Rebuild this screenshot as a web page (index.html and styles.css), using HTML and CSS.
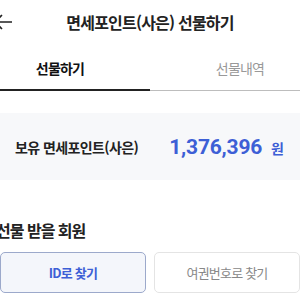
FILE: index.html
```html
<!DOCTYPE html>
<html lang="ko">
<head>
<meta charset="utf-8">
<link rel="stylesheet" href="styles.css">
</head>
<body>
<div class="page">
  <header class="header">
    <span class="back">
      <svg width="26" height="20" viewBox="0 0 26 20"><path d="M20 10H3M10 3L3 10L10 17" fill="none" stroke="#222" stroke-width="1.6"/></svg>
    </span>
    <h1 class="title">면세포인트(사은) 선물하기</h1>
  </header>
  <nav class="tabs">
    <div class="tab active">선물하기</div>
    <div class="tab">선물내역</div>
  </nav>
  <main class="content">
    <div class="card">
      <span class="label">보유 면세포인트(사은)</span>
      <span class="amount"><span class="num">1,376,396</span><span class="won">원</span></span>
    </div>
    <h2 class="heading">선물 받을 회원</h2>
    <div class="buttons">
      <button class="btn primary">ID로 찾기</button>
      <button class="btn">여권번호로 찾기</button>
    </div>
  </main>
</div>
</body>
</html>
```
FILE: styles.css
```css
html, body { margin: 0; padding: 0; background: #fff; }
body { font-family: "Noto Sans CJK KR", "Noto Sans", sans-serif; color: #222; overflow: hidden; }
.page { width: 360px; margin-left: -30px; }
.header { height: 44px; display: flex; align-items: center; justify-content: center; position: relative; }
.back { position: absolute; left: 22px; top: 12px; display: flex; }
.title { margin: 0; font-size: 16px; font-weight: 700; letter-spacing: -0.8px; }
.tabs { display: flex; margin-top: 3px; border-bottom: 1px solid #bdbdbd; }
.tab { flex: 1; text-align: center; height: 43px; line-height: 42px; font-size: 14px; letter-spacing: -0.8px; color: #999; }
.tab.active { color: #111; font-weight: 700; border-bottom: 2px solid #222; margin-bottom: -1px; height: 42px; }
.content { padding: 22px 30px 0; }
.card { background: #f7f8fa; height: 67px; display: flex; align-items: center; justify-content: space-between; padding: 0 16px 0 15px; box-sizing: border-box; margin-top: 0; }
.label { font-size: 14px; font-weight: 700; letter-spacing: -0.6px; color: #222; }
.amount { display: flex; align-items: baseline; color: #3d5fd6; }
.num { font-family: Roboto, sans-serif; font-size: 21px; font-weight: 700; letter-spacing: -0.2px; }
.won { font-size: 14px; font-weight: 700; margin-left: 9px; }
.heading { margin: 38px 0 0 -4px; font-size: 16px; font-weight: 700; letter-spacing: -1px; color: #222; line-height: 24px; }
.buttons { display: flex; gap: 8px; margin-top: 10px; }
.btn { flex: 1; height: 41px; border-radius: 5px; border: 1px solid #e4e4e4; background: #fff; font-family: inherit; font-size: 13px; letter-spacing: -0.8px; color: #888; padding: 0; }
.btn.primary { background: #f4f6fb; border-color: #9ca9cb; color: #3d5fd6; font-weight: 700; }
```
